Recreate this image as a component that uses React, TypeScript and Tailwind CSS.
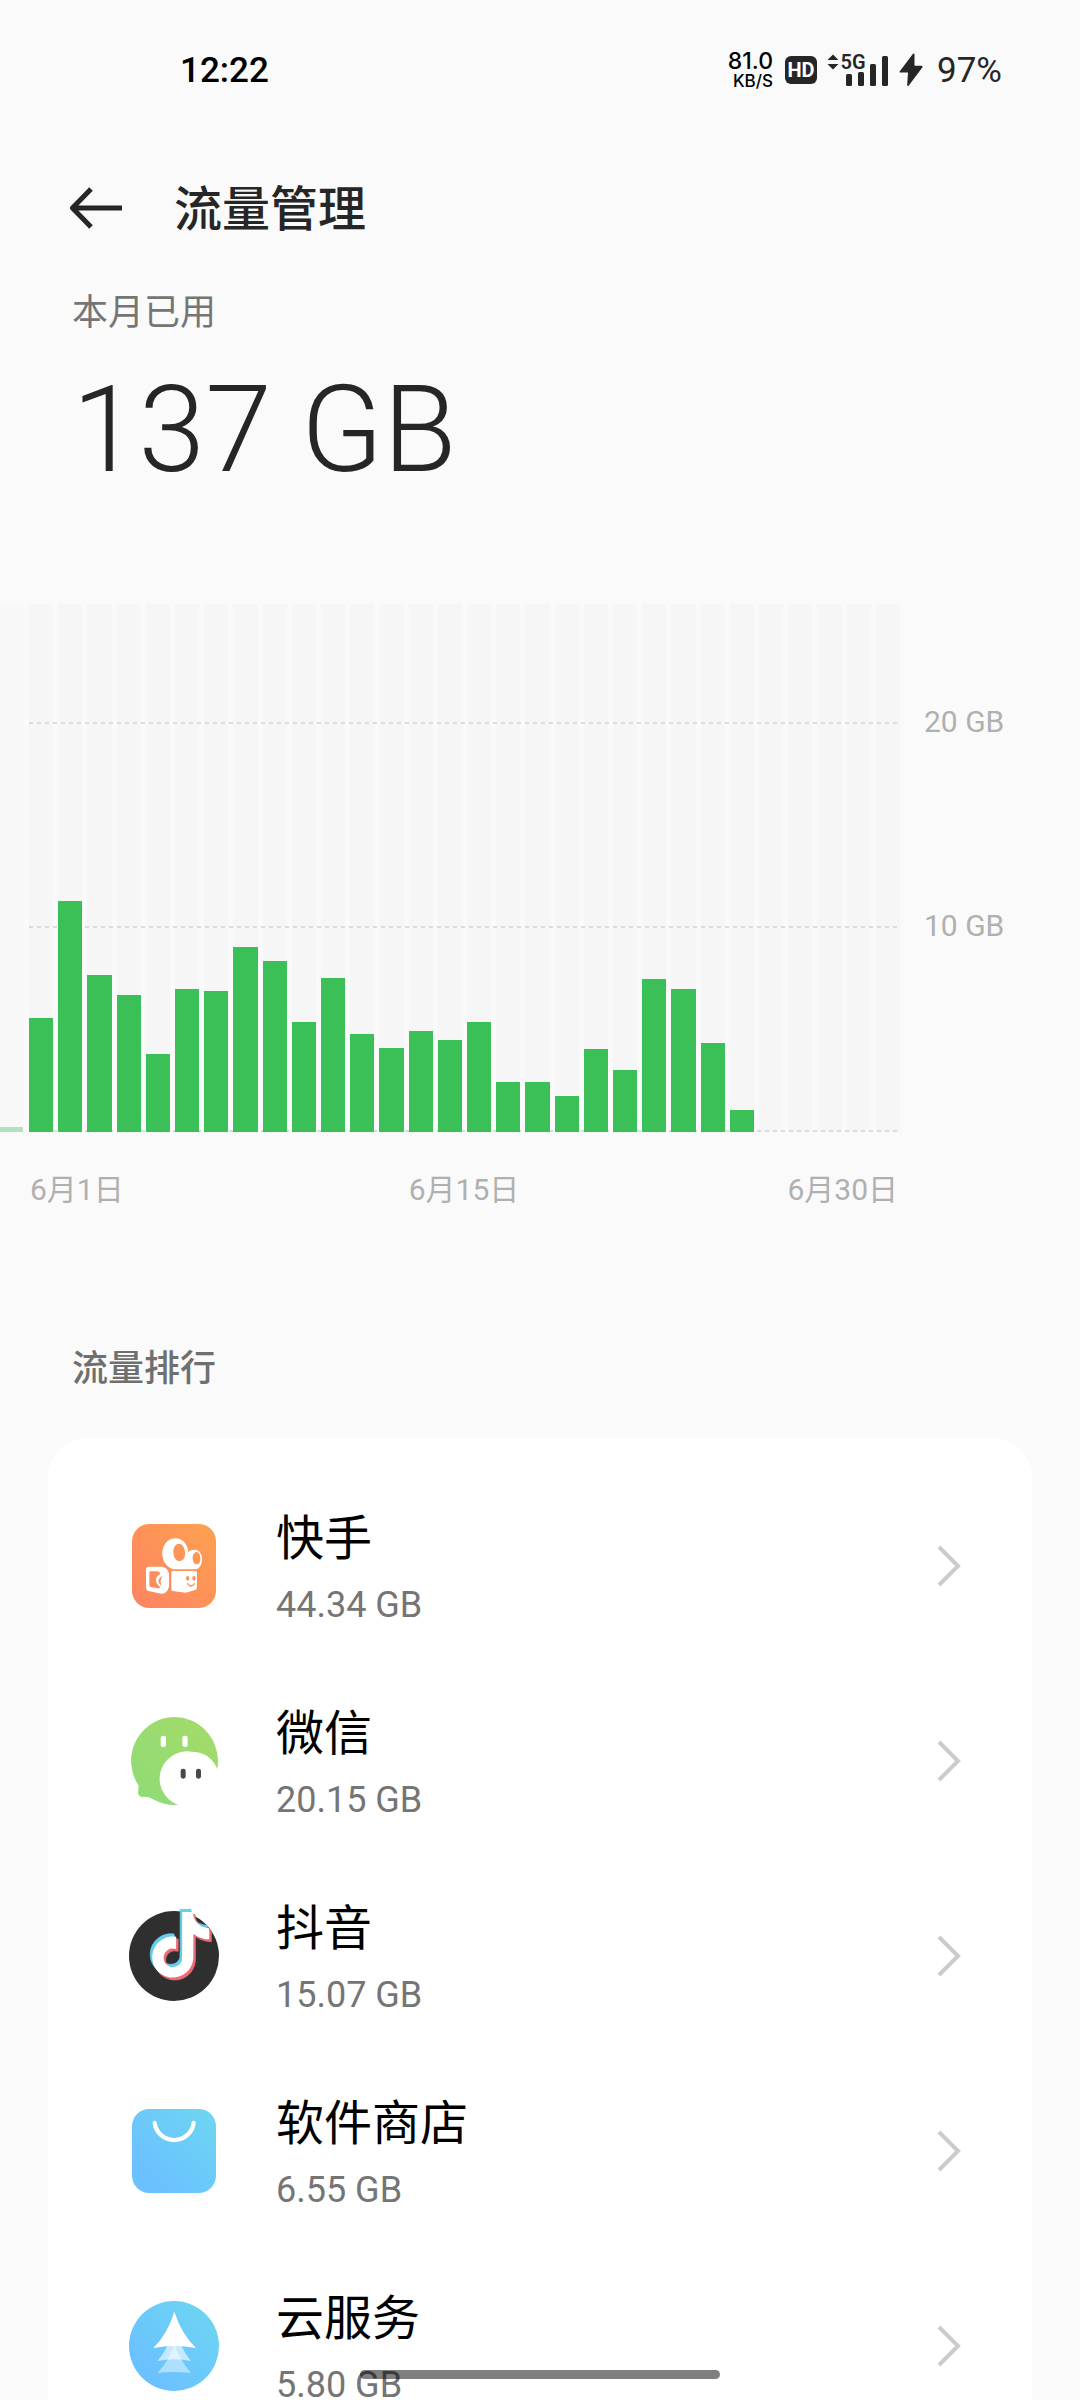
import type { ReactNode } from "react";

const DAYS_IN_MONTH = 30;
const CHART_MAX_GB = 25.88;
const GRID_LINES = [0, 10, 20];

const dailyUsage = [
  5.59, 11.32, 7.7, 6.72, 3.82, 7.01, 6.91, 9.07, 8.38, 5.39, 7.55, 4.8, 4.12, 4.95, 4.5, 5.39,
  2.45, 2.45, 1.76, 4.07, 3.04, 7.52, 7.01, 4.36, 1.08,
];

const percent = (gb: number) => `${(gb / CHART_MAX_GB) * 100}%`;

function StatusBar() {
  return (
    <div className="flex h-[140px] shrink-0 items-center justify-between pr-[78px] pl-[180px]">
      <time className="pt-[2px] text-[35px] leading-[48px] font-medium text-black">12:22</time>
      <div className="flex items-center text-[#262626]">
        <div className="mr-3 flex flex-col items-end font-['Inter'] font-medium text-black">
          <span className="text-[23px] leading-[22px]">81.0</span>
          <span className="text-[17px] leading-[18px]">KB/S</span>
        </div>
        <div className="mr-[10px] flex h-7 w-8 items-center justify-center rounded-[6px] bg-[#262626] text-[20px] leading-[20px] font-bold text-white">
          HD
        </div>
        <svg className="mr-[10px] h-11 w-[62px]" viewBox="0 -6 62 44" fill="currentColor" role="img" aria-label="5G">
          <path d="M6 0.500 11.500 6H.5zM6 15.500 11.500 10H.5z" />
          <text x="13.500" y="15" fontSize="20" fontWeight="600">5G</text>
          <rect x="19" y="20" width="6" height="12" rx="1.500" />
          <rect x="31" y="18" width="6" height="14" rx="1.500" />
          <rect x="43" y="10" width="6" height="22" rx="1.500" />
          <rect x="55" y="2" width="6" height="30" rx="1.500" />
        </svg>
        <svg className="mr-[14px] h-[34px] w-6" viewBox="0 0 24 34" fill="currentColor" aria-hidden="true">
          <path d="M14 0.800 0.800 18.200Q0 19.500 1.500 19.500H9L8.200 32Q8.300 33.800 9.800 32.500L23.300 14.500Q24 12.800 22.500 12.800H15.500V1.500Q15.300-.3 14 .8Z" />
        </svg>
        <span className="pt-[2px] text-[35px] leading-[48px]">97%</span>
      </div>
    </div>
  );
}

function PageHeader() {
  return (
    <header className="flex h-[136px] shrink-0 items-center gap-[52px] pl-[70px]">
      <button type="button" aria-label="返回">
        <svg className="h-[42px] w-[52px]" viewBox="0 0 52 42" fill="none" stroke="#262626" strokeWidth="5">
          <path d="M21 2 2.500 21 21 40M3 21H52" strokeLinejoin="round" />
        </svg>
      </button>
      <h1 className="pt-1 text-[48px] leading-[60px] font-medium text-[#262626]">流量管理</h1>
    </header>
  );
}

function UsageChart() {
  return (
    <section aria-label="每日流量" className="mt-[104px] shrink-0">
      <div className="flex h-[528px] gap-[6px]">
        <div className="flex w-[23px] items-end bg-[#f8f8f8]">
          <div className="h-[5px] w-full bg-[#b2e1bd]" />
        </div>
        <div className="relative isolate flex-1">
          <div className="grid h-full grid-cols-30 gap-[5px]">
            {Array.from({ length: DAYS_IN_MONTH }, (_, day) => (
              <div key={day} className="flex items-end bg-[#f6f6f6]">
                <div className="z-10 w-full bg-[#3bc057]" style={{ height: percent(dailyUsage[day] ?? 0) }} />
              </div>
            ))}
          </div>
          {GRID_LINES.map((gb) => (
            <div
              key={gb}
              className="absolute inset-x-0 h-[2px] bg-[repeating-linear-gradient(90deg,#dcdcdc_0px,#dcdcdc_4px,transparent_4px,transparent_8px)]"
              style={{ bottom: percent(gb) }}
            />
          ))}
        </div>
        <div className="relative w-[174px] text-[30px] leading-[36px] text-[#b0b0b0]">
          {GRID_LINES.filter((gb) => gb > 0).map((gb) => (
            <span key={gb} className="absolute left-[18px] translate-y-1/2 pb-1" style={{ bottom: percent(gb) }}>
              {gb} GB
            </span>
          ))}
        </div>
      </div>
      <div className="mt-[37px] mr-[182px] ml-[30px] grid grid-cols-3 text-[30px] leading-[42px] text-[#b0b0b0]">
        <span>6月1日</span>
        <span className="text-center">6月15日</span>
        <span className="text-right">6月30日</span>
      </div>
    </section>
  );
}

function KuaishouIcon() {
  return (
    <svg className="size-[84px]" viewBox="66 69 252 252" aria-hidden="true">
      <defs>
        <linearGradient id="kuaishou" x1="0" y1="1" x2="1" y2="0">
          <stop offset="0" stopColor="#fd8362" />
          <stop offset="1" stopColor="#fea14f" />
        </linearGradient>
      </defs>
      <rect x="66" y="69" width="252" height="252" rx="52" fill="url(#kuaishou)" />
      <path
        fill="#fff"
        fillRule="evenodd"
        d="M196 112C220 112 233 132 235 153C242 147 251 145 259 147C271 151 277 163 276 178C275 191 269 203 258 205H190C170 199 158 182 157 160C156 134 172 112 196 112ZM207 128C196 128 189 140 190 155C191 170 198 180 209 180C220 179 227 168 225 152C223 137 217 128 207 128ZM259 153C252 154 247 163 248 174C249 184 254 191 261 190C268 189 272 180 271 170C270 160 266 152 259 153Z"
      />
      <path d="M188 210H256Q261 210 261 215V258Q261 265 255 267L227 275L188 270Q184 270 184 265V214Q184 210 188 210Z" fill="#fff" />
      <g fill="#fd9159">
        <ellipse cx="233" cy="232" rx="5" ry="7" />
        <ellipse cx="252" cy="232" rx="5" ry="7" />
        <path d="M233 248Q242 262 254 248" fill="none" stroke="#fd9159" strokeWidth="4" strokeLinecap="round" />
      </g>
      <path
        fill="#fff"
        fillRule="evenodd"
        d="M116 197H157Q167 198 172 206L177 217V257L173 267Q166 279 154 278L115 270Q108 268 108 260V206Q108 198 116 197ZM121 211Q118 211 118 215V253Q118 257 122 258L145 262Q150 262 150 257Q138 249 138 236Q139 224 151 219Q149 211 143 211Z"
      />
      <path d="M157 224Q143 232 146 244Q148 252 155 254Q148 238 157 224Z" fill="#fd8b5d" />
    </svg>
  );
}

function WechatIcon() {
  return (
    <svg className="size-[90px]" viewBox="57 75 270 270" aria-hidden="true">
      <defs>
        <linearGradient id="wechat" x1="0" y1="1" x2="1" y2="0">
          <stop offset="0" stopColor="#8edb78" />
          <stop offset="1" stopColor="#a5db68" />
        </linearGradient>
      </defs>
      <path
        d="M192 78A132 132 0 0 1 324 210C324 283 265 342 192 342Q162 342 128 324Q114 316 99 318Q86 318 84 305L86 284A132 132 0 0 1 192 78Z"
        fill="url(#wechat)"
      />
      <path d="M245 182A80 80 0 0 1 327 262V345H218A80 80 0 0 1 245 182Z" fill="#fff" />
      <rect x="152" y="134" width="16" height="34" rx="7" fill="#fff" />
      <rect x="217" y="134" width="16" height="34" rx="7" fill="#fff" />
      <rect x="212" y="233" width="15" height="30" rx="7" fill="#484848" />
      <rect x="258" y="233" width="15" height="30" rx="7" fill="#484848" />
    </svg>
  );
}

const NOTE_PATH =
  "M12.525.02c1.31-.02 2.61-.01 3.91-.02.08 1.53.63 3.09 1.75 4.17 1.12 1.11 2.7 1.62 4.24 1.79v4.03c-1.44-.05-2.89-.35-4.2-.97-.57-.26-1.1-.59-1.62-.93-.01 2.92.01 5.84-.02 8.75-.08 1.4-.54 2.79-1.35 3.94-1.31 1.92-3.58 3.17-5.91 3.21-1.43.08-2.86-.31-4.08-1.03-2.02-1.19-3.44-3.37-3.65-5.71-.02-.5-.03-1-.01-1.49.18-1.9 1.12-3.72 2.58-4.96 1.66-1.44 3.98-2.13 6.15-1.72.02 1.48-.04 2.96-.04 4.44-.99-.32-2.15-.23-3.02.37-.63.41-1.11 1.04-1.36 1.75-.21.51-.15 1.07-.14 1.61.24 1.64 1.82 3.02 3.5 2.87 1.12-.01 2.19-.66 2.77-1.61.19-.33.4-.67.41-1.06.1-1.79.06-3.57.07-5.36.01-4.03-.01-8.05.02-12.07z";

function DouyinIcon() {
  return (
    <svg className="size-[90px]" viewBox="57 75 270 270" overflow="visible" aria-hidden="true">
      <circle cx="192" cy="210" r="135" fill="#2f2f2f" />
      <path d={NOTE_PATH} fill="#66cdea" stroke="#66cdea" strokeWidth="0.300" transform="translate(108 70) scale(8.200)" />
      <path d={NOTE_PATH} fill="#ec6a73" stroke="#ec6a73" strokeWidth="0.300" transform="translate(120 85) scale(8.200)" />
      <path d={NOTE_PATH} fill="#fff" transform="translate(114 78) scale(8.200)" />
    </svg>
  );
}

function StoreIcon() {
  return (
    <svg className="size-[84px]" viewBox="66 84 252 252" aria-hidden="true">
      <defs>
        <linearGradient id="store" x1="0" y1="1" x2="1" y2="0">
          <stop offset="0.200" stopColor="#6bc1ff" />
          <stop offset="1" stopColor="#6dd7f0" />
        </linearGradient>
      </defs>
      <rect x="66" y="84" width="252" height="252" rx="52" fill="url(#store)" />
      <path d="M134 126A59 59 0 0 0 251 126" fill="none" stroke="#fff" strokeWidth="13" strokeLinecap="round" />
    </svg>
  );
}

function CloudIcon() {
  return (
    <svg className="size-[90px]" viewBox="57 660 270 270" aria-hidden="true">
      <defs>
        <linearGradient id="cloud" x1="0" y1="1" x2="1" y2="0">
          <stop offset="0.200" stopColor="#6bc1ff" />
          <stop offset="1" stopColor="#6dd7f0" />
        </linearGradient>
      </defs>
      <circle cx="192" cy="795" r="135" fill="url(#cloud)" />
      <path d="M193 790Q212 842 243 876Q193 870 142 876Q176 842 193 790Z" fill="#fff" opacity="0.450" />
      <path d="M193 735Q212 805 243 840Q193 830 142 840Q176 805 193 735Z" fill="#fff" opacity="0.600" />
      <path d="M193 692Q215 760 258 801Q193 789 130 801Q172 760 193 692Z" fill="#fff" />
    </svg>
  );
}

const apps: { name: string; usage: string; icon: ReactNode }[] = [
  { name: "快手", usage: "44.34 GB", icon: <KuaishouIcon /> },
  { name: "微信", usage: "20.15 GB", icon: <WechatIcon /> },
  { name: "抖音", usage: "15.07 GB", icon: <DouyinIcon /> },
  { name: "软件商店", usage: "6.55 GB", icon: <StoreIcon /> },
  { name: "云服务", usage: "5.80 GB", icon: <CloudIcon /> },
];

function AppRanking() {
  return (
    <section className="mt-[131px] shrink-0">
      <h2 className="pl-[72px] text-[36px] leading-[54px] font-medium text-[#6f6f6f]">流量排行</h2>
      <ul className="mx-12 mt-[42px] rounded-[40px] bg-white py-[30px]">
        {apps.map((app) => (
          <li key={app.name}>
            <a href="#" className="flex h-[195px] items-center pr-[71px] pl-[81px]">
              <span className="flex w-[90px] justify-center">{app.icon}</span>
              <span className="ml-[57px] flex flex-1 flex-col gap-[10px] pt-1">
                <span className="text-[48px] leading-[64px] text-black">{app.name}</span>
                <span className="text-[36px] leading-[48px] text-[#757575]">{app.usage}</span>
              </span>
              <svg className="h-[42px] w-6" viewBox="0 0 24 42" fill="none" stroke="#cbcbcb" strokeWidth="4" aria-hidden="true">
                <path d="M2 2 21 21 2 40" />
              </svg>
            </a>
          </li>
        ))}
      </ul>
    </section>
  );
}

export default function App() {
  return (
    <div className="relative flex h-screen flex-col overflow-hidden bg-[#fafafa] font-['Roboto','Noto_Sans_CJK_SC',sans-serif]">
      <StatusBar />
      <PageHeader />
      <main className="flex flex-1 flex-col overflow-y-auto [scrollbar-width:none]">
        <section className="shrink-0 px-[72px] pt-[10px]">
          <h2 className="text-[36px] leading-[54px] text-[#757575]">本月已用</h2>
          <p className="mt-5 text-[120px] leading-[140px] font-light text-[#262626]">137 GB</p>
        </section>
        <UsageChart />
        <AppRanking />
      </main>
      <div className="absolute bottom-[21px] left-1/2 h-[9px] w-1/3 -translate-x-1/2 rounded-full bg-black/50" />
    </div>
  );
}
